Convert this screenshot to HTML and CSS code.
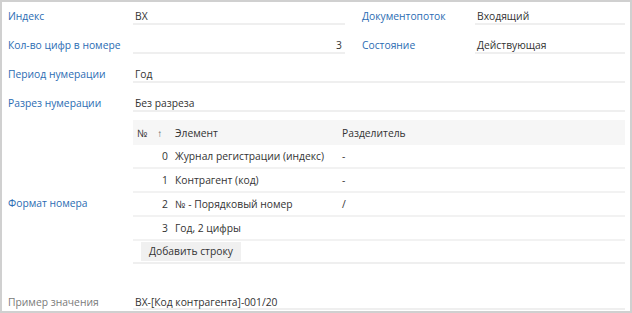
FILE: index.html
```html
<!DOCTYPE html>
<html lang="ru">
<head>
  <meta charset="UTF-8" />
  <title>Нумератор</title>
  <link rel="stylesheet" href="styles.css">
</head>
<body>
  <div class="window">
    <div class="form">
      <div class="label">Индекс</div>
      <div class="field">ВХ</div>
      <div class="label right-label">Документопоток</div>
      <div class="field">Входящий</div>

      <div class="label">Кол-во цифр в номере</div>
      <div class="field num">3</div>
      <div class="label right-label">Состояние</div>
      <div class="field">Действующая</div>

      <div class="label">Период нумерации</div>
      <div class="field wide">Год</div>

      <div class="label">Разрез нумерации</div>
      <div class="field wide">Без разреза</div>

      <div class="label format-label">Формат номера</div>
      <div class="table wide">
        <div class="tr th">
          <div class="c-num">№ <span class="sort">↑</span></div>
          <div class="c-el">Элемент</div>
          <div class="c-sep">Разделитель</div>
        </div>
        <div class="tr">
          <div class="c-num">0</div>
          <div class="c-el">Журнал регистрации (индекс)</div>
          <div class="c-sep">-</div>
        </div>
        <div class="tr">
          <div class="c-num">1</div>
          <div class="c-el">Контрагент (код)</div>
          <div class="c-sep">-</div>
        </div>
        <div class="tr">
          <div class="c-num">2</div>
          <div class="c-el">№ - Порядковый номер</div>
          <div class="c-sep">/</div>
        </div>
        <div class="tr">
          <div class="c-num">3</div>
          <div class="c-el">Год, 2 цифры</div>
          <div class="c-sep"></div>
        </div>
        <div class="actions">
          <button class="add">Добавить строку</button>
        </div>
      </div>

      <div class="label muted example-label">Пример значения</div>
      <div class="field wide example">ВХ-[Код контрагента]-001/20</div>
    </div>
  </div>
</body>
</html>
```

FILE: styles.css
```css
body {
  margin: 0;
  font-family: "Open Sans", "Noto Sans", sans-serif;
  font-size: 10.3px;
  color: #333;
  background: #fff;
}
.window {
  width: 632px;
  height: 313px;
  box-sizing: border-box;
  border: 2px solid #d0d0d0;
  overflow: hidden;
}
.form {
  display: grid;
  grid-template-columns: 125px 212px 17px 113px 150px;
  padding: 0 0 0 6px;
}
.label {
  color: #2b6cb3;
  padding-top: 7px;
  height: 23px;
  box-sizing: border-box;
  white-space: nowrap;
}
.right-label {
  grid-column: 4;
}
.field {
  height: 23px;
  box-sizing: border-box;
  padding: 7px 2px 0;
  border-bottom: 2px solid #efefef;
  margin-bottom: 6px;
  white-space: nowrap;
}
.num {
  text-align: right;
  padding-right: 3px;
}
.wide {
  grid-column: 2 / 6;
}
.format-label {
  align-self: center;
  padding-top: 16px;
}
.table {
  margin-top: 2px;
  border-bottom: 2px solid #efefef;
}
.tr {
  display: grid;
  grid-template-columns: 40px 169px 1fr;
  height: 24px;
  align-items: center;
  border-bottom: 2px solid #f2f2f2;
  box-sizing: border-box;
  white-space: nowrap;
}
.th {
  background: #f6f6f6;
  height: 25px;
  border-bottom: none;
}
.c-num {
  text-align: right;
  padding-right: 5px;
}
.th .c-num {
  text-align: left;
  padding-left: 4px;
}
.sort {
  margin-left: 7px;
  font-size: 10px;
  color: #555;
}
.c-el {
  padding-left: 2px;
}
.actions {
  padding: 1px 0 1px 8px;
}
.add {
  font-family: inherit;
  font-size: 10.3px;
  color: #333;
  background: #f0f0f0;
  border: none;
  padding: 2px 8px;
  height: 19px;
  line-height: 15px;
}
.example-label {
  margin-top: 23px;
  padding-top: 8px;
}
.muted {
  color: #7a7a7a;
}
.example {
  margin-top: 23px;
  padding-top: 8px;
}
```
